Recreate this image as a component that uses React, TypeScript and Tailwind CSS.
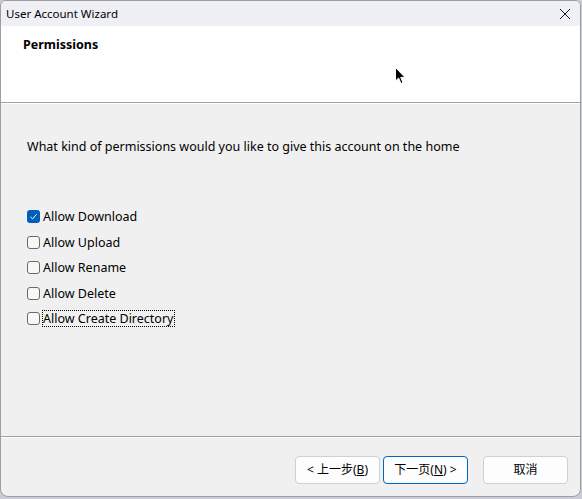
import React from "react";

const items = [
  { label: "Allow Download", checked: true },
  { label: "Allow Upload", checked: false },
  { label: "Allow Rename", checked: false },
  { label: "Allow Delete", checked: false },
  { label: "Allow Create Directory", checked: false, focused: true },
];

function Box({ checked }: { checked: boolean }) {
  if (checked) {
    return (
      <span className="flex h-[13px] w-[13px] items-center justify-center rounded-[3px] bg-[#005fb8]">
        <svg width="9" height="9" viewBox="0 0 9 9" fill="none">
          <path d="M1.5 4.8 L3.6 6.8 L7.6 2.3" stroke="#ffffff" strokeWidth="1" />
        </svg>
      </span>
    );
  }
  return <span className="h-[13px] w-[13px] rounded-[3px] border border-[#6b6b6b] bg-[#f7f7f7]" />;
}

export default function App() {
  const ui = { fontFamily: '"Noto Sans", "Noto Sans CJK SC", sans-serif' };
  return (
    <div className="relative h-[499px] w-[582px] overflow-hidden bg-[#c9ccd6]" style={ui}>
      <div className="flex h-[497px] w-[581px] flex-col overflow-hidden rounded-b-lg rounded-t-md border border-[#9e9e9e] bg-[#f0f0f0] text-[12.5px] text-black">
        {/* title bar */}
        <div className="flex h-[25px] shrink-0 items-center justify-between bg-[#eff0f5] pl-[5px] pr-[8px]">
          <span className="text-[11.5px] leading-none">User Account Wizard</span>
          <svg width="12" height="12" viewBox="0 0 12 12" className="mr-[1px]">
            <path d="M1 1 L11 11 M11 1 L1 11" stroke="#1a1a1a" strokeWidth="1" />
          </svg>
        </div>

        {/* header */}
        <div className="h-[76px] shrink-0 bg-white pl-[22px] pt-[10px]">
          <span className="font-bold">Permissions</span>
        </div>
        <div className="h-px shrink-0 bg-[#a0a0a0]" />
        <div className="h-px shrink-0 bg-white" />

        {/* body */}
        <div className="flex flex-1 flex-col pl-[26px] pt-[35px]">
          <p className="leading-[16px]">What kind of permissions would you like to give this account on the home</p>
          <div className="mt-[49px] flex flex-col">
            {items.map((it) => (
              <div key={it.label} className="flex h-[25.5px] items-center gap-[2px]">
                <Box checked={it.checked} />
                <span
                  className={
                    it.focused
                      ? "border border-dotted border-black pl-0 pr-px leading-[15px]"
                      : "px-px leading-[15px]"
                  }
                >
                  {it.label}
                </span>
              </div>
            ))}
          </div>
        </div>

        <div className="h-px shrink-0 bg-[#a0a0a0]" />
        <div className="h-px shrink-0 bg-white" />

        {/* footer */}
        <div className="flex h-[58px] shrink-0 items-start justify-end gap-[15px] pr-[12px] pt-[18px] text-[12px]">
          <div className="flex gap-[3px]">
            <button className="h-[28px] w-[85px] rounded-[4px] border border-[#d0d0d0] bg-[#fdfdfd]">
              &lt; 上一步(<u>B</u>)
            </button>
            <button className="h-[28px] w-[85px] rounded-[4px] border border-[#0067c0] bg-[#fdfdfd]">
              下一页(<u>N</u>) &gt;
            </button>
          </div>
          <button className="h-[28px] w-[85px] rounded-[4px] border border-[#d0d0d0] bg-[#fdfdfd]">取消</button>
        </div>
      </div>

      {/* mouse cursor */}
      <svg className="absolute left-[395px] top-[67px]" width="12" height="19" viewBox="0 0 12 19">
        <path d="M0.5 0.5 L0.5 14 L3.6 11 L6 16.5 L8 15.6 L5.7 10.4 L10 10.4 Z" fill="#000" stroke="#fff" strokeWidth="1" />
      </svg>
    </div>
  );
}
